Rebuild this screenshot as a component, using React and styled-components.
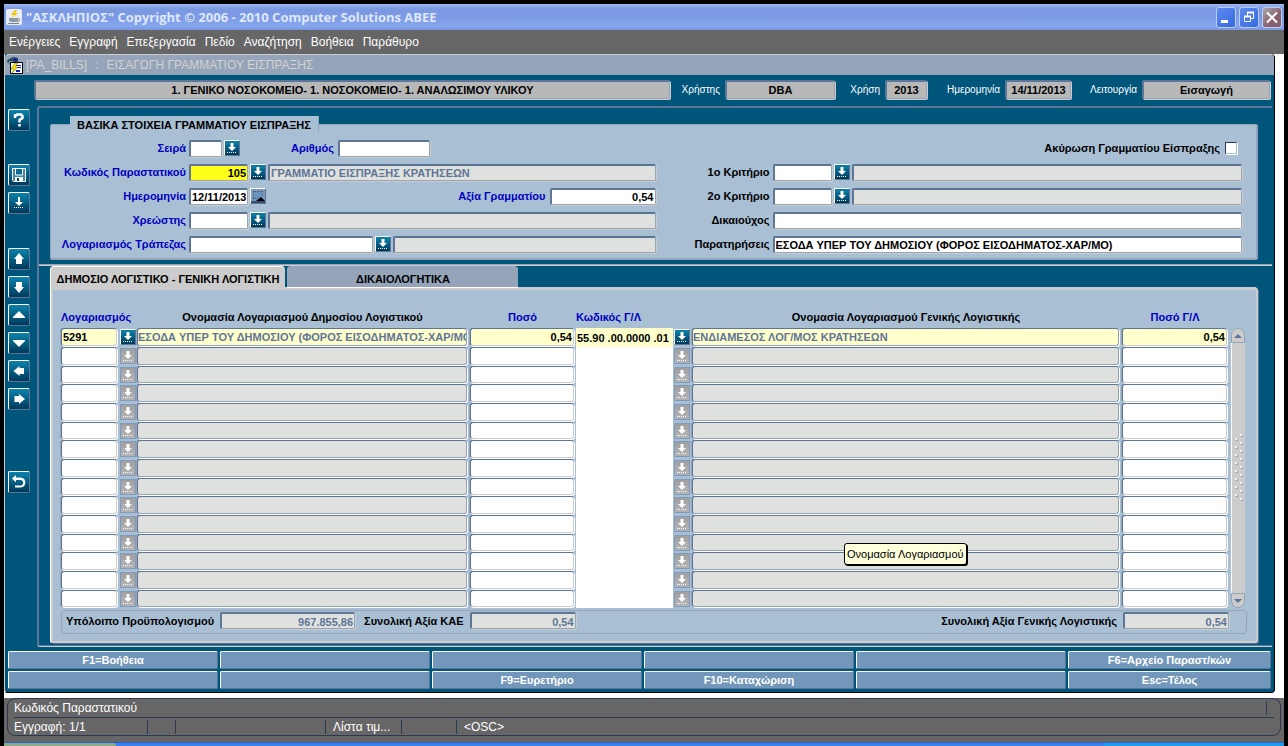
import React from 'react';
import styled, { createGlobalStyle, css } from 'styled-components';

const c = {
  teal: '#00557b',
  panel: '#a9bfd4',
  slate: '#5f7597',
  mist: '#95a4b8',
  silver: '#cccccc',
  readonly: '#dee1de',
  current: '#ffffcc',
  blue: '#0000c0',
  chrome: '#666666',
  ink: '#2a3850',
};

const Global = createGlobalStyle`
  *, *::before, *::after { box-sizing: border-box; }
  body { margin: 0; background: #000; font: bold 11px/14px "Liberation Sans", Arial, sans-serif; color: #000; }
  button, input { font: inherit; }
`;

const Shell = styled.div`
  display: flex;
  flex-direction: column;
  min-height: 100vh;
  padding: 4px 4px 0;
`;

const TitleBar = styled.header`
  display: flex;
  align-items: center;
  height: 26px;
  padding: 0 2px;
  gap: 4px;
  background: linear-gradient(#9db9f0 0, #7b98e2 5px, #7d9be4 14px, #86a8ee 22px, #7896dd 26px);
`;

const AppTitle = styled.h1`
  flex: 1;
  margin: 0;
  font: bold 13px/18px "Open Sans", "Noto Sans", sans-serif;
  color: #dfe8fc;
  white-space: nowrap;
`;

const WindowButtons = styled.div`
  display: flex;
  gap: 3px;
`;

const WindowButton = styled.button`
  width: 20px;
  height: 21px;
  padding: 0;
  border: 1px solid #b9cdf6;
  border-radius: 3px;
  background: ${(p) => (p.$close ? 'linear-gradient(135deg,#a9a9ad,#8a5f6c 60%)' : 'linear-gradient(135deg,#5c8bf0,#3469e0)')};
  svg { display: block; }
`;

const MenuBar = styled.nav`
  display: flex;
  align-items: center;
  height: 24px;
  padding: 0 5px;
  gap: 9px;
  background: ${c.chrome};
`;

const MenuItem = styled.button`
  padding: 0;
  border: 0;
  background: none;
  color: #fff;
  font: 12px/16px "Liberation Sans", Arial, sans-serif;
`;

const Workspace = styled.div`
  flex: 1;
  display: flex;
  padding: 0 9px 5px 0;
  background: #fff;
`;

const DocWindow = styled.main`
  flex: 1;
  display: flex;
  flex-direction: column;
  min-width: 0;
  border-left: 1px solid ${c.silver};
  border-right: 1px solid #000;
  border-bottom: 1px solid #000;
  border-radius: 0 4px 4px 4px;
  background: ${c.teal};
`;

const DocTitle = styled.div`
  display: flex;
  align-items: center;
  gap: 3px;
  height: 21px;
  padding-left: 2px;
  border-top: 1px solid ${c.silver};
  border-radius: 4px 4px 0 0;
  background: ${c.mist};
  color: #d2d2d2;
  font: 12px/16px "Liberation Sans", Arial, sans-serif;
`;

const DocName = styled.span`
  display: flex;
  gap: 8px;
  white-space: nowrap;
`;

const InfoRow = styled.div`
  display: grid;
  grid-template-columns: minmax(0, 1fr) 155px 82px 134px 189px;
  column-gap: 10px;
  height: 31px;
  padding: 5px 4px 0 29px;
`;

const InfoItem = styled.div`
  display: flex;
  align-items: center;
  justify-content: flex-end;
  gap: 5px;
  height: 19px;
`;

const InfoLabel = styled.label`
  color: #fff;
  font: 10px/14px "Liberation Sans", Arial, sans-serif;
`;

const sunken = css`
  border: 1px solid;
  border-color: ${c.slate} ${c.mist} ${c.mist} ${c.slate};
  border-top-width: 2px;
  border-left-width: 2px;
  border-radius: 2px;
  box-shadow: 1px 1px 0 ${c.silver};
`;

const InfoField = styled.input`
  ${sunken}
  width: ${(p) => (p.$w ? p.$w + 'px' : '100%')};
  height: 19px;
  padding: 0;
  background: #b8b8b8;
  color: #000;
  text-align: center;
  font-weight: bold;
  outline: 0;
`;

const Body = styled.div`
  flex: 1;
  display: flex;
  padding-left: 3px;
`;

const Toolbar = styled.aside`
  width: 29px;
  padding-top: 3px;
  display: flex;
  flex-direction: column;
`;

const ToolGroup = styled.div`
  display: grid;
  row-gap: 6px;
  justify-content: start;
  margin-bottom: ${(p) => p.$after}px;
`;

const ToolButton = styled.button`
  width: 22px;
  height: 22px;
  padding: 0;
  border: 1px solid;
  border-color: #fff ${c.slate} ${c.slate} #fff;
  border-radius: 2px;
  background: linear-gradient(#0b83ab, #00395b);
  svg { display: block; }
`;

const Frame = styled.div`
  flex: 1;
  min-width: 0;
  margin-right: 2px;
  padding: 8px 0 2px;
  border: solid ${c.slate};
  border-width: 2px 0 1px 2px;
  border-radius: 3px 0 0 3px;
  box-shadow: 0 1px 0 ${c.silver};
`;

const Basics = styled.fieldset`
  display: block;
  min-width: 0;
  margin: 0 14px 0 11px;
  padding: 7px 14px 5px 0;
  border: 1px solid ${c.mist};
  border-right-width: 2px;
  border-bottom-width: 2px;
  border-radius: 3px;
  background: ${c.panel};
`;

const Legend = styled.legend`
  height: 16px;
  margin-left: 19px;
  padding: 1px 7px;
  border-right: 1px solid ${c.mist};
  background: ${c.panel};
  line-height: 16px;
  white-space: nowrap;
`;

const FormGrid = styled.div`
  display: grid;
  grid-template-columns: 138px minmax(0, 467fr) 117px minmax(0, 470fr);
  grid-auto-rows: 18px;
  row-gap: 6px;
`;

const Label = styled.label`
  align-self: center;
  padding-right: 3px;
  text-align: right;
  white-space: nowrap;
  color: ${(p) => (p.$key ? c.blue : '#000')};
`;

const Line = styled.div`
  display: flex;
  align-items: center;
  gap: 2px;
  min-width: 0;
`;

const Push = styled.span`
  display: flex;
  align-items: center;
  gap: 1px;
  margin-left: ${(p) => (p.$near ? '49px' : 'auto')};
`;

const Field = styled.input`
  ${sunken}
  flex: ${(p) => (p.$w ? `0 0 ${p.$w}px` : '1 1 0')};
  width: ${(p) => (p.$w ? p.$w + 'px' : 'auto')};
  min-width: 0;
  height: 17px;
  padding: 1px 1px 0 1px;
  background: ${(p) => p.$bg || (p.$off ? c.readonly : '#fff')};
  color: ${(p) => (p.$off ? c.slate : '#000')};
  text-align: ${(p) => (p.$num ? 'right' : 'left')};
  outline: 0;
`;

const PickButton = styled.button`
  flex: none;
  width: 16px;
  height: 16px;
  padding: 0;
  border: 1px solid;
  border-color: #fff ${c.slate} ${c.slate} #fff;
  background: ${(p) => (p.$idle ? 'linear-gradient(#a0a0a0, #b4b4b4)' : 'linear-gradient(#0b83ab, #00395b)')};
  ${(p) => p.$idle && css`border-color: #7d9cbd;`}
  svg { display: block; }
`;

const Tick = styled.input`
  appearance: none;
  width: 12px;
  height: 12px;
  margin: 0 5px 0 1px;
  border: 1px solid;
  border-color: ${c.ink} ${c.panel} ${c.panel} ${c.ink};
  background: #fff;
  box-shadow: 1px 1px 0 #fff;
`;

const Divider = styled.hr`
  height: 2px;
  margin: 4px 0 0;
  border: 0;
  background: linear-gradient(${c.mist} 1px, ${c.silver} 1px);
`;

const Tabs = styled.div`
  display: flex;
  gap: 2px;
  margin: 0 14px 0 11px;
`;

const Tab = styled.button`
  width: ${(p) => (p.$on ? 235 : 231)}px;
  height: 21px;
  padding: 3px 0 0;
  border: 0 solid ${(p) => (p.$on ? '#fff' : c.mist)};
  border-width: 1px 0 0 1px;
  border-radius: 4px 4px 0 0;
  background: ${(p) => (p.$on ? c.silver : c.mist)};
  color: #000;
  font-weight: bold;
  white-space: nowrap;
  ${(p) => !p.$on && css`box-shadow: 0 1px 0 #fff;`}
`;

const Panel = styled.section`
  margin: 0 14px 0 12px;
  padding: 20px 9px 7px 8px;
  border: solid ${c.silver};
  border-width: 3px 2px 2px 2px;
  border-radius: 0 4px 3px 2px;
  box-shadow: 1px 1px 0 ${c.slate}, -1px 0 0 #fff;
  background: ${c.panel};
`;

const GridArea = styled.div`
  display: flex;
  gap: 2px;
  padding-right: 2px;
`;

const Table = styled.table`
  flex: 1;
  display: block;
  min-width: 0;
  thead, tbody { display: block; }
`;

const columns = css`
  display: grid;
  grid-template-columns: 58px 17px minmax(0, 333fr) 107px 97px 18px minmax(0, 430fr) 108px;
`;

const HeadRow = styled.tr`
  ${columns}
  height: 18px;
`;

const Th = styled.th`
  padding: 0;
  line-height: 14px;
  white-space: nowrap;
  text-align: ${(p) => p.$align || 'center'};
  color: ${(p) => (p.$key ? c.blue : '#000')};
`;

const Row = styled.tr`
  ${columns}
  height: 19px;
  &:nth-child(3n) { height: 18px; }
`;

const Td = styled.td`
  position: relative;
  display: flex;
  padding: 0;
  padding-right: ${(p) => (p.$pad ? '2px' : 0)};
  padding-left: ${(p) => (p.$lead ? '1px' : 0)};
  ${PickButton} { margin-top: 1px; }
`;

const Cell = styled.input`
  flex: 1;
  min-width: 0;
  height: calc(100% - 1px);
  padding: 0 1px;
  border: 1px solid;
  border-color: ${c.slate} ${c.silver} ${c.silver} ${c.slate};
  border-radius: 3px;
  outline: 0;
  background: ${(p) => (p.$current ? c.current : p.$off ? c.readonly : '#fff')};
  color: ${(p) => (p.$off ? c.slate : '#000')};
  text-align: ${(p) => (p.$num ? 'right' : 'left')};
  box-shadow: 1px 1px 0 #fff, -1px 0 0 ${c.mist};
  ${(p) => p.$off && css`
    padding-right: 0;
    padding-left: 0;
    border-color: ${c.slate} ${c.mist} ${c.mist} ${c.slate};
  `}
  ${(p) => p.$flat && css`
    height: 100%;
    border: 0;
    border-radius: 0;
    box-shadow: none;
  `}
`;

const ScrollBar = styled.div`
  display: flex;
  flex-direction: column;
  width: 14px;
  margin-top: 18px;
`;

const ScrollButton = styled.button`
  width: 14px;
  height: 15px;
  padding: 0;
  border: 1px solid ${c.mist};
  border-radius: ${(p) => (p.$down ? '0 0 7px 7px' : '7px 7px 0 0')};
  background: ${c.silver};
  svg { display: block; }
`;

const ScrollTrack = styled.div`
  flex: 1;
  display: flex;
  align-items: center;
  justify-content: center;
  border-left: 1px solid #fff;
  background: ${c.silver};
`;

const Totals = styled.div`
  display: flex;
  align-items: center;
  height: 24px;
  margin-top: 2px;
  padding: 0 17px 3px 4px;
  border: 1px solid ${c.mist};
  border-radius: 4px;
`;

const TotalItem = styled.div`
  display: flex;
  align-items: center;
  gap: 3px;
  margin-left: ${(p) => (p.$last ? 'auto' : 0)};
  margin-right: ${(p) => (p.$last ? 0 : '9px')};
`;

const KeyGrid = styled.div`
  display: grid;
  grid-template-columns: repeat(5, minmax(0, 210fr)) minmax(0, 203fr);
  grid-auto-rows: 18px;
  gap: 2px;
  margin-top: 5px;
  padding: 0 3px 3px;
`;

const KeyButton = styled.button`
  padding: 0;
  border: 1px solid;
  border-color: #fff ${c.slate} ${c.slate} #fff;
  border-radius: 2px;
  background: #7397ba;
  color: #fff;
  font-weight: bold;
`;

const StatusBar = styled.footer`
  padding: 0 3px 6px;
  background: ${c.chrome};
`;

const StatusBox = styled.div`
  height: 38px;
  padding: 0 6px;
  border: 1px solid ${c.ink};
  border-radius: 8px;
  color: #fff;
  font: 12px/16px "Liberation Sans", Arial, sans-serif;
`;

const StatusLine = styled.div`
  display: flex;
  height: 19px;
  padding: 2px 0 0;
  ${(p) => p.$top && css`border-bottom: 1px solid ${c.ink};`}
`;

const StatusCell = styled.span`
  width: ${(p) => (p.$w ? p.$w + 'px' : 'auto')};
  flex: ${(p) => (p.$w ? 'none' : 1)};
  height: 14px;
  line-height: 14px;
  padding-left: ${(p) => (p.$first ? 0 : '7px')};
  border-right: ${(p) => (p.$end ? 0 : `1px solid ${c.ink}`)};
  white-space: nowrap;
`;

const TaskBar = styled.div`
  display: flex;
  height: 4px;
  background: #3a80ea;
  border-top: 1px solid #2a5fd0;
`;

const TaskStart = styled.span`
  width: 112px;
  border-radius: 0 4px 0 0;
  background: #8cab84;
`;

const TaskTray = styled.span`
  width: 180px;
  margin-left: auto;
  background: #1f9be8;
`;

const Tooltip = styled.div`
  position: absolute;
  z-index: 1;
  top: 215px;
  left: 153px;
  padding: 2px;
  border: 1px solid #000;
  border-radius: 3px;
  box-shadow: 1px 1px 0 #000;
  background: #ffffdc;
  font: 11px/16px "Liberation Sans", Arial, sans-serif;
  white-space: nowrap;
`;

const PickIcon = () => (
  <svg width="14" height="14" viewBox="0 0 14 14" aria-hidden="true">
    <path d="M5.500 2h3v4h2.500L7 10 3 6h2.500z" fill="#fff" />
    <path d="M2 11.500h10" stroke="#fff" strokeDasharray="1 1" />
  </svg>
);

const CalendarIcon = () => (
  <svg width="14" height="14" viewBox="0 0 14 14" aria-hidden="true">
    <path d="M0 0h14v14H0z" fill="#8099b5" />
    <path d="M2 2h9v7H2z" fill="#6a93c0" />
    <path d="M2 2.500h10M2.500 2v8M11.500 2v6M2 9.500h6" stroke="#3c5a80" strokeDasharray="1 1" />
    <path d="M0 12h14v2H0z" fill="#34506f" />
    <path d="M5 12l5-4 4 4z" fill="#000" />
  </svg>
);

const toolPaths = {
  save: (
    <>
      <path d="M3.500 3.500h13v13h-12l-1-1z" fill="#3f88ad" stroke="#fff" />
      <path d="M6.500 4v6h7V4" fill="#0b6d94" stroke="#fff" />
      <path d="M6 12h8v4H6z" fill="#fff" />
      <path d="M8 13h2v3H8z" fill="#00456a" />
    </>
  ),
  load: (
    <>
      <path d="M9 4h2v5h3l-4 4-4-4h3z" fill="#fff" />
      <path d="M5 14.500h10" stroke="#fff" strokeDasharray="1 1" />
    </>
  ),
  first: <path d="M10 4l5 6h-2v5H7v-5H5z" fill="#fff" />,
  last: <path d="M10 16l5-6h-2V5H7v5H5z" fill="#fff" />,
  up: <path d="M10 6l6 6v1H4v-1z" fill="#fff" />,
  down: <path d="M10 14l6-6V7H4v1z" fill="#fff" />,
  left: <path d="M4.500 10l6-5v2H15v6h-4.500v2z" fill="#fff" />,
  right: <path d="M16 10l-6-5v2H5.500v6H10v2z" fill="#fff" />,
  undo: <path d="M3 6.500L7 3v2.500h4.500c6.500 0 6.500 10 0 10H6v-2h5.500c3.500 0 3.500-5.500 0-5.500H7v2.500z" fill="#fff" />,
  help: <path d="M6 8V5.500h1L8 4.500h4l1.500 1.500v2L10.500 10v2.500M10.500 14v2.500" fill="none" stroke="#fff" strokeWidth="2.500" />,
};

const Tool = ({ kind, label }) => (
  <ToolButton type="button" aria-label={label}>
    <svg width="20" height="20" viewBox="0 0 20 20" aria-hidden="true">{toolPaths[kind]}</svg>
  </ToolButton>
);

const Pick = ({ idle }) => (
  <PickButton type="button" $idle={idle} aria-label="Λίστα τιμών">
    <PickIcon />
  </PickButton>
);

const menu = ['Ενέργειες', 'Εγγραφή', 'Επεξεργασία', 'Πεδίο', 'Αναζήτηση', 'Βοήθεια', 'Παράθυρο'];

const info = [
  { id: 'user', label: 'Χρήστης', value: 'DBA', w: 110 },
  { id: 'year', label: 'Χρήση', value: '2013', w: 42 },
  { id: 'today', label: 'Ημερομηνία', value: '14/11/2013', w: 66 },
  { id: 'mode', label: 'Λειτουργία', value: 'Εισαγωγή', w: 128 },
];

const rows = [
  {
    account: '5291',
    name: 'ΕΣΟΔΑ ΥΠΕΡ ΤΟΥ ΔΗΜΟΣΙΟΥ (ΦΟΡΟΣ ΕΙΣΟΔΗΜΑΤΟΣ-ΧΑΡ/ΜΟ',
    amount: '0,54',
    code: '55.90 .00.0000 .01',
    glName: 'ΕΝΔΙΑΜΕΣΟΣ ΛΟΓ/ΜΟΣ ΚΡΑΤΗΣΕΩΝ',
    glAmount: '0,54',
  },
  ...Array.from({ length: 14 }, () => ({})),
];

const keys = [
  'F1=Βοήθεια', '', '', '', '', 'F6=Αρχείο Παραστ/κών',
  '', '', 'F9=Ευρετήριο', 'F10=Καταχώριση', '', 'Esc=Τέλος',
];

const LedgerRow = ({ row, index }) => {
  const on = index === 0;
  return (
    <Row>
      <Td $pad><Cell $current={on} defaultValue={row.account} aria-label="Λογαριασμός" /></Td>
      <Td $lead><Pick idle={!on} /></Td>
      <Td $pad $lead><Cell $off $current={on} readOnly value={row.name || ''} aria-label="Ονομασία Λογαριασμού Δημοσίου Λογιστικού" /></Td>
      <Td $pad $lead><Cell $num $current={on} defaultValue={row.amount} aria-label="Ποσό" /></Td>
      <Td><Cell $flat $current={on} defaultValue={row.code} aria-label="Κωδικός Γ/Λ" /></Td>
      <Td $lead><Pick idle={!on} /></Td>
      <Td $pad $lead>
        <Cell $off $current={on} readOnly value={row.glName || ''} aria-label="Ονομασία Λογαριασμού Γενικής Λογιστικής" />
        {on && <Tooltip role="tooltip">Ονομασία Λογαριασμού</Tooltip>}
      </Td>
      <Td $pad $lead><Cell $num $current={on} defaultValue={row.glAmount} aria-label="Ποσό Γ/Λ" /></Td>
    </Row>
  );
};

export default function App() {
  return (
    <>
      <Global />
      <Shell>
        <TitleBar>
          <svg width="16" height="16" viewBox="0 0 16 16" aria-hidden="true">
            <rect width="16" height="16" rx="2" fill="#e9ecf2" />
            <path d="M9 1L5 6h3L6 9l6-5H9l2-3z" fill="#f2c500" />
            <path d="M3 9h9v2c0 3-9 3-9 0z" fill="#8c97a8" />
            <path d="M12 9.500c3 0 2 3-1 3M2 14.500h11" fill="none" stroke="#77808f" />
          </svg>
          <AppTitle>"ΑΣΚΛΗΠΙΟΣ" Copyright © 2006 - 2010 Computer Solutions ABEE</AppTitle>
          <WindowButtons>
            <WindowButton type="button" aria-label="Ελαχιστοποίηση">
              <svg width="18" height="19" aria-hidden="true"><path d="M4 12h7v3H4z" fill="#fff" /></svg>
            </WindowButton>
            <WindowButton type="button" aria-label="Επαναφορά">
              <svg width="18" height="19" aria-hidden="true">
                <path d="M7.500 8V4.500h6v6H11M4.500 8.500h6v5h-6z" fill="none" stroke="#fff" />
                <path d="M7 4.500h7M4 8.500h7" stroke="#fff" strokeWidth="2" />
              </svg>
            </WindowButton>
            <WindowButton type="button" $close aria-label="Κλείσιμο">
              <svg width="18" height="19" aria-hidden="true"><path d="M4 4.500l10 10M14 4.500l-10 10" stroke="#fff" strokeWidth="2" /></svg>
            </WindowButton>
          </WindowButtons>
        </TitleBar>
        <MenuBar>
          {menu.map((m) => <MenuItem type="button" key={m}>{m}</MenuItem>)}
        </MenuBar>
        <Workspace>
          <DocWindow>
            <DocTitle>
              <svg width="16" height="17" viewBox="0 0 16 17" aria-hidden="true">
                <path d="M0 4l2-2 4-2 5 1v4l-7 4-2-3-2-1z" fill="#2b4a66" />
                <path d="M7 1h3v3H7z" fill="#1a1fa8" />
                <path d="M2 4h4v2H2z" fill="#7fa38e" />
                <path d="M3.500 5.500h12v11h-12z" fill="#fff" stroke="#000" />
                <path d="M9 8h5v1H9zM9 10h5v1H9zM9 13h4v2H9z" fill="#1520b0" />
                <path d="M8 6l-4 6h3l-2 4 6-6H8l3-4z" fill="#ffe800" stroke="#6d6a10" strokeWidth=".5" />
              </svg>
              <DocName>
                <span>[PA_BILLS]</span>
                <span>:</span>
                <span>ΕΙΣΑΓΩΓΗ ΓΡΑΜΜΑΤΙΟΥ ΕΙΣΠΡΑΞΗΣ</span>
              </DocName>
            </DocTitle>
            <InfoRow>
              <InfoField aria-label="Τμήμα" readOnly value="1. ΓΕΝΙΚΟ ΝΟΣΟΚΟΜΕΙΟ- 1. ΝΟΣΟΚΟΜΕΙΟ- 1. ΑΝΑΛΩΣΙΜΟΥ ΥΛΙΚΟΥ" />
              {info.map((i) => (
                <InfoItem key={i.id}>
                  <InfoLabel htmlFor={i.id}>{i.label}</InfoLabel>
                  <InfoField id={i.id} $w={i.w} readOnly value={i.value} />
                </InfoItem>
              ))}
            </InfoRow>
            <Body>
              <Toolbar>
                <ToolGroup $after={33}><Tool kind="help" label="Βοήθεια" /></ToolGroup>
                <ToolGroup $after={34}>
                  <Tool kind="save" label="Αποθήκευση" />
                  <Tool kind="load" label="Λίστα τιμών" />
                </ToolGroup>
                <ToolGroup $after={61}>
                  <Tool kind="first" label="Προηγούμενη ομάδα" />
                  <Tool kind="last" label="Επόμενη ομάδα" />
                  <Tool kind="up" label="Προηγούμενη εγγραφή" />
                  <Tool kind="down" label="Επόμενη εγγραφή" />
                  <Tool kind="left" label="Προηγούμενο πεδίο" />
                  <Tool kind="right" label="Επόμενο πεδίο" />
                </ToolGroup>
                <ToolGroup $after={0}><Tool kind="undo" label="Επιστροφή" /></ToolGroup>
              </Toolbar>
              <Frame>
                <Basics>
                  <Legend>ΒΑΣΙΚΑ ΣΤΟΙΧΕΙΑ ΓΡΑΜΜΑΤΙΟΥ ΕΙΣΠΡΑΞΗΣ</Legend>
                  <FormGrid>
                    <Label $key htmlFor="series">Σειρά</Label>
                    <Line>
                      <Field id="series" $w={33} />
                      <Pick />
                      <Push $near>
                        <Label $key htmlFor="number">Αριθμός</Label>
                        <Field id="number" $w={92} />
                      </Push>
                    </Line>
                    <span />
                    <Line>
                      <Push>
                        <Label htmlFor="cancel">Ακύρωση Γραμματίου Είσπραξης</Label>
                        <Tick type="checkbox" id="cancel" />
                      </Push>
                    </Line>

                    <Label $key htmlFor="doc">Κωδικός Παραστατικού</Label>
                    <Line>
                      <Field id="doc" $w={59} $num $bg="#ffff1a" defaultValue="105" />
                      <Pick />
                      <Field $off readOnly value="ΓΡΑΜΜΑΤΙΟ ΕΙΣΠΡΑΞΗΣ ΚΡΑΤΗΣΕΩΝ" aria-label="Περιγραφή Παραστατικού" />
                    </Line>
                    <Label htmlFor="crit1">1ο Κριτήριο</Label>
                    <Line>
                      <Field id="crit1" $w={59} />
                      <Pick />
                      <Field $off readOnly aria-label="Περιγραφή 1ου Κριτηρίου" />
                    </Line>

                    <Label $key htmlFor="date">Ημερομηνία</Label>
                    <Line>
                      <Field id="date" $w={59} defaultValue="12/11/2013" />
                      <PickButton type="button" aria-label="Ημερολόγιο"><CalendarIcon /></PickButton>
                      <Push>
                        <Label $key htmlFor="value">Αξία Γραμματίου</Label>
                        <Field id="value" $w={106} $num defaultValue="0,54" />
                      </Push>
                    </Line>
                    <Label htmlFor="crit2">2ο Κριτήριο</Label>
                    <Line>
                      <Field id="crit2" $w={59} />
                      <Pick />
                      <Field $off readOnly aria-label="Περιγραφή 2ου Κριτηρίου" />
                    </Line>

                    <Label $key htmlFor="debtor">Χρεώστης</Label>
                    <Line>
                      <Field id="debtor" $w={59} />
                      <Pick />
                      <Field $off readOnly aria-label="Ονομασία Χρεώστη" />
                    </Line>
                    <Label htmlFor="payee">Δικαιούχος</Label>
                    <Line><Field id="payee" /></Line>

                    <Label $key htmlFor="bank">Λογαριασμός Τράπεζας</Label>
                    <Line>
                      <Field id="bank" $w={184} />
                      <Pick />
                      <Field $off readOnly aria-label="Ονομασία Τράπεζας" />
                    </Line>
                    <Label htmlFor="notes">Παρατηρήσεις</Label>
                    <Line><Field id="notes" defaultValue="ΕΣΟΔΑ ΥΠΕΡ ΤΟΥ ΔΗΜΟΣΙΟΥ (ΦΟΡΟΣ ΕΙΣΟΔΗΜΑΤΟΣ-ΧΑΡ/ΜΟ)" /></Line>
                  </FormGrid>
                </Basics>
                <Divider />
                <Tabs role="tablist">
                  <Tab type="button" role="tab" aria-selected="true" $on>ΔΗΜΟΣΙΟ ΛΟΓΙΣΤΙΚΟ - ΓΕΝΙΚΗ ΛΟΓΙΣΤΙΚΗ</Tab>
                  <Tab type="button" role="tab" aria-selected="false">ΔΙΚΑΙΟΛΟΓΗΤΙΚΑ</Tab>
                </Tabs>
                <Panel>
                  <GridArea>
                    <Table cellSpacing="0">
                      <thead>
                        <HeadRow>
                          <Th $key $align="left">Λογαριασμός</Th>
                          <Th />
                          <Th>Ονομασία Λογαριασμού Δημοσίου Λογιστικού</Th>
                          <Th $key>Ποσό</Th>
                          <Th $key $align="left">Κωδικός Γ/Λ</Th>
                          <Th />
                          <Th>Ονομασία Λογαριασμού Γενικής Λογιστικής</Th>
                          <Th $key>Ποσό Γ/Λ</Th>
                        </HeadRow>
                      </thead>
                      <tbody>
                        {rows.map((r, i) => <LedgerRow key={i} row={r} index={i} />)}
                      </tbody>
                    </Table>
                    <ScrollBar>
                      <ScrollButton type="button" aria-label="Πάνω">
                        <svg width="12" height="13" aria-hidden="true"><path d="M6 5l4 4H2z" fill={c.slate} /></svg>
                      </ScrollButton>
                      <ScrollTrack>
                        <svg width="10" height="68" aria-hidden="true">
                          {Array.from({ length: 17 }, (_, i) => (
                            <g key={i}>
                              <rect x={i % 2 ? 2 : 7} y={i * 4 + 1} width="2" height="2" fill={c.mist} />
                              <rect x={i % 2 ? 1 : 6} y={i * 4} width="2" height="2" fill="#f4f4f4" />
                            </g>
                          ))}
                        </svg>
                      </ScrollTrack>
                      <ScrollButton type="button" $down aria-label="Κάτω">
                        <svg width="12" height="13" aria-hidden="true"><path d="M6 9l4-4H2z" fill={c.slate} /></svg>
                      </ScrollButton>
                    </ScrollBar>
                  </GridArea>
                  <Totals>
                    <TotalItem>
                      <Label htmlFor="budget">Υπόλοιπο Προϋπολογισμού</Label>
                      <Field id="budget" $off $num $w={135} readOnly value="967.855,86" />
                    </TotalItem>
                    <TotalItem>
                      <Label htmlFor="kae">Συνολική Αξία ΚΑΕ</Label>
                      <Field id="kae" $off $num $w={106} readOnly value="0,54" />
                    </TotalItem>
                    <TotalItem $last>
                      <Label htmlFor="gl">Συνολική Αξία Γενικής Λογιστικής</Label>
                      <Field id="gl" $off $num $w={106} readOnly value="0,54" />
                    </TotalItem>
                  </Totals>
                </Panel>
              </Frame>
            </Body>
            <KeyGrid>
              {keys.map((k, i) => <KeyButton type="button" key={i} aria-label={k || 'Κενό πλήκτρο'}>{k}</KeyButton>)}
            </KeyGrid>
          </DocWindow>
        </Workspace>
        <StatusBar>
          <StatusBox>
            <StatusLine $top>
              <StatusCell $first>Κωδικός Παραστατικού</StatusCell>
              <StatusCell $w={7} $end />
            </StatusLine>
            <StatusLine>
              <StatusCell $first $w={134}>Εγγραφή: 1/1</StatusCell>
              <StatusCell $w={28} />
              <StatusCell $w={150} />
              <StatusCell $w={76}>Λίστα τιμ...</StatusCell>
              <StatusCell $w={55} />
              <StatusCell $end>&lt;OSC&gt;</StatusCell>
            </StatusLine>
          </StatusBox>
        </StatusBar>
        <TaskBar><TaskStart /><TaskTray /></TaskBar>
      </Shell>
    </>
  );
}
